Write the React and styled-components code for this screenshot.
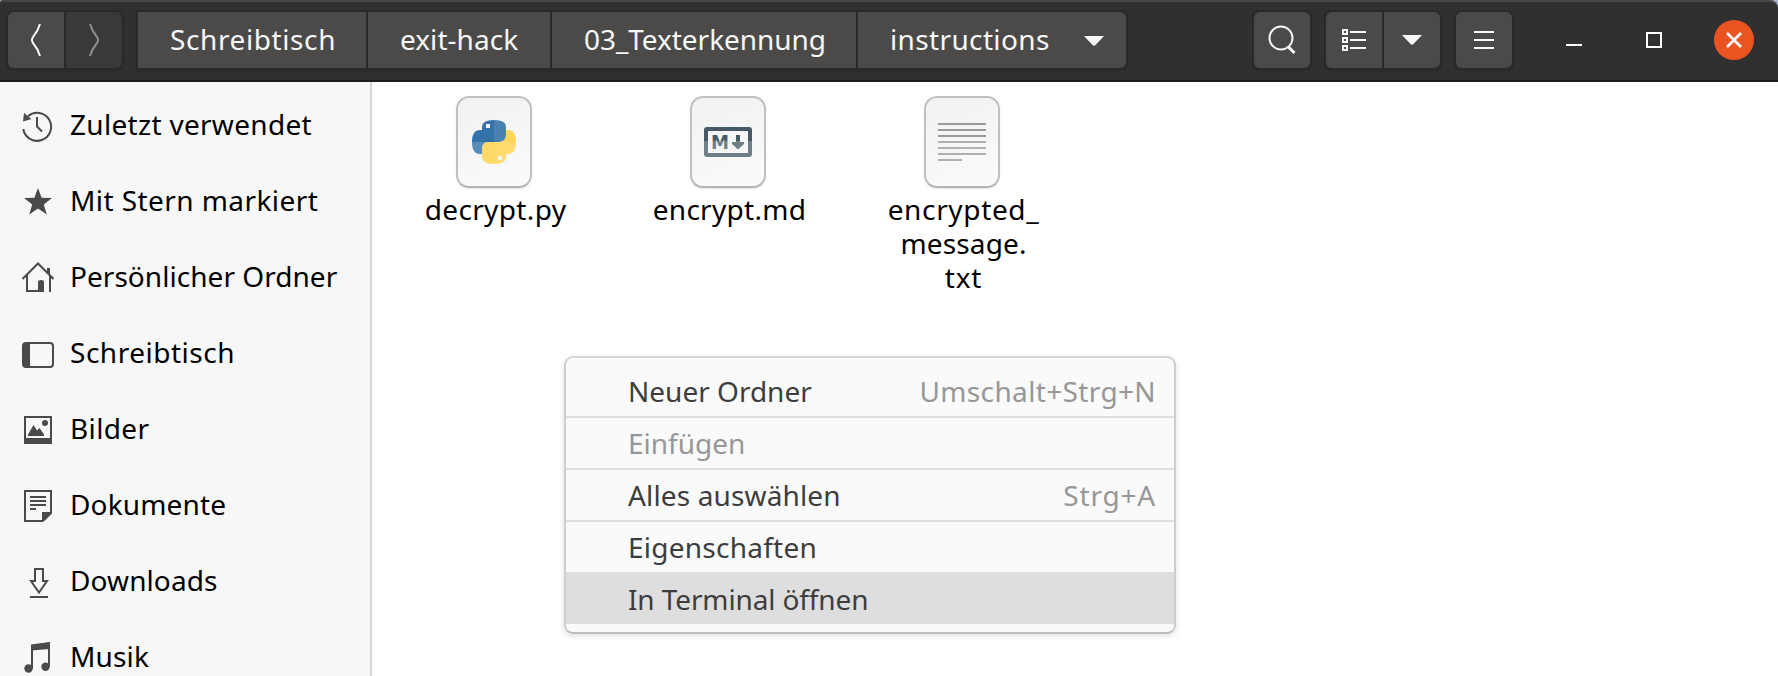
import React from "react";
import styled, { createGlobalStyle, css } from "styled-components";

const GlobalStyle = createGlobalStyle`
  *, *::before, *::after { box-sizing: border-box; }
  body {
    margin: 0;
    background: #fff;
    font-family: "Noto Sans", "Open Sans", sans-serif;
    font-size: 28px;
    overflow: hidden;
  }
  svg { display: block; flex: none; }
`;

const Window = styled.div`
  display: flex;
  flex-direction: column;
  width: 1778px;
  height: 676px;
  background: #a9b3c9;
  overflow: hidden;
`;

const HeaderBar = styled.header`
  display: flex;
  align-items: flex-start;
  height: 82px;
  flex: none;
  padding: 8px 0 0 6px;
  border-top: 2px solid #474546;
  border-bottom: 2px solid #1f1c1e;
  border-radius: 3px 8px 0 0;
  background: #322f30;
`;

const ButtonGroup = styled.div`
  display: flex;
  gap: 2px;
  height: 60px;
  padding: 2px;
  margin-left: ${(p) => p.$before || 0}px;
  border-radius: ${(p) => (p.$squareStart ? "0 8px 8px 0" : "8px")};
  background: #2a2828;
  box-shadow: 0 2px 1px rgba(0, 0, 0, 0.06);
`;

const HeaderButton = styled.button`
  display: flex;
  align-items: center;
  justify-content: center;
  width: 56px;
  height: 56px;
  padding: 0;
  border: 0;
  color: ${(p) => (p.$dim ? "#8f8e8d" : "#f7f7f7")};
  background: ${(p) => (p.$dim ? "#3a3939" : "#4b4a48")};
  &:first-child { border-top-left-radius: 6px; border-bottom-left-radius: 6px; }
  &:last-child { border-top-right-radius: 6px; border-bottom-right-radius: 6px; }
`;

const Crumb = styled.button`
  display: flex;
  align-items: center;
  justify-content: space-between;
  width: ${(p) => p.$width}px;
  height: 56px;
  padding: 0 22px 3px 32px;
  border: 0;
  color: #f7f7f7;
  background: #4b4a48;
  font: inherit;
  letter-spacing: ${(p) => p.$tracking}px;
  white-space: nowrap;
  &:last-child { border-radius: 0 6px 6px 0; }
`;

const CrumbCaret = styled.span`
  padding-top: 5px;
`;

const WindowControls = styled.div`
  display: flex;
  gap: 40px;
  margin: 10px 0 0 40px;
`;

const WindowButton = styled.button`
  display: flex;
  align-items: center;
  justify-content: center;
  width: 40px;
  height: 40px;
  padding: 0;
  border: 0;
  border-radius: 50%;
  color: #fff;
  background: ${(p) => (p.$close ? "#e95420" : "transparent")};
`;

const Body = styled.div`
  display: flex;
  flex: 1;
  min-height: 0;
`;

const Sidebar = styled.nav`
  width: 372px;
  flex: none;
  padding-top: 6px;
  border-right: 2px solid #d5d5d5;
  background: #f7f7f7;
  overflow: hidden;
`;

const Place = styled.a`
  display: flex;
  align-items: center;
  gap: 16px;
  height: 76px;
  padding: 0 0 0 22px;
  color: #4a4a4a;
`;

const PlaceName = styled.span`
  padding-bottom: 4px;
  color: #000;
  letter-spacing: ${(p) => p.$tracking}px;
  white-space: nowrap;
`;

const Files = styled.main`
  position: relative;
  display: flex;
  align-items: flex-start;
  flex: 1;
  padding: 14px 0 0 5px;
  background: #fff;
`;

const File = styled.figure`
  display: flex;
  flex-direction: column;
  align-items: center;
  width: 234px;
  margin: 0;
`;

const Sheet = styled.div`
  display: flex;
  align-items: center;
  justify-content: center;
  width: 76px;
  height: 92px;
  border: 2px solid #c0c0c0;
  border-bottom-color: #b3b3b3;
  border-radius: 13px;
  background: linear-gradient(160deg, #f1f1f1, #fbfbfb);
  box-shadow: 0 1px 2px rgba(0, 0, 0, 0.1);
`;

const FileName = styled.figcaption`
  padding: 4px 0 0 3px;
  color: #000;
  line-height: 34px;
  text-align: center;
`;

const NameLine = styled.div`
  letter-spacing: ${(p) => p.$tracking}px;
`;

const Menu = styled.div`
  position: absolute;
  left: 192px;
  top: 274px;
  width: 612px;
  padding: 8px 0;
  border: 2px solid #cdcdcd;
  border-top-color: #d6d6d6;
  border-bottom-color: #bdbdbd;
  border-radius: 9px;
  background: #fafafa;
  box-shadow: 0 2px 6px rgba(0, 0, 0, 0.13);
`;

const MenuItem = styled.div`
  display: flex;
  align-items: center;
  justify-content: space-between;
  height: 50px;
  padding: 0 18px 0 62px;
  color: ${(p) => (p.$disabled ? "#979797" : "#3d3d3d")};
  line-height: 50px;
  ${(p) =>
    p.$separated &&
    css`
      height: 52px;
      border-bottom: 2px solid #dedede;
    `}
  ${(p) =>
    p.$selected &&
    css`
      height: 52px;
      padding-top: 2px;
      background: #dedede;
    `}
`;

const MenuText = styled.span`
  letter-spacing: ${(p) => p.$tracking || 0}px;
  white-space: nowrap;
`;

const Shortcut = styled(MenuText)`
  color: #979797;
`;

const Caret = () => (
  <svg width="20" height="10" viewBox="0 0 20 10">
    <path d="M0 0H20L11.5 9Q10 10.5 8.5 9Z" fill="currentColor" />
  </svg>
);

const Angle = ({ forward }) => (
  <svg width="12" height="34" viewBox="0 0 12 34" fill="none" stroke="currentColor" strokeWidth="2">
    <path d={forward ? "M2 1 Q4 8 9 14 Q11 17 9 20 Q4 26 2 33" : "M10 1 Q8 8 3 14 Q1 17 3 20 Q8 26 10 33"} />
  </svg>
);

const SearchIcon = () => (
  <svg width="32" height="32" viewBox="0 0 32 32" fill="none" stroke="currentColor">
    <circle cx="15" cy="14" r="11.5" strokeWidth="2" />
    <path d="M22 22.5L28.5 29" strokeWidth="3" />
  </svg>
);

const ListIcon = () => (
  <svg width="24" height="22" viewBox="0 0 24 22" fill="none" stroke="currentColor" strokeWidth="2">
    <path d="M1 1h4v4h-4zM1 9h4v4h-4zM1 17h4v4h-4zM8 3h16M8 11h16M8 19h16" />
  </svg>
);

const MenuIcon = () => (
  <svg width="20" height="18" viewBox="0 0 20 18" stroke="currentColor" strokeWidth="2">
    <path d="M0 1h20M0 9h20M0 17h20" />
  </svg>
);

const ControlIcon = ({ d, width = 2 }) => (
  <svg width="16" height="16" viewBox="0 0 16 16" fill="none" stroke="currentColor" strokeWidth={width}>
    <path d={d} />
  </svg>
);

const placeDrawings = {
  recent: (
    <>
      <path d="M1.3 19A14 14 0 1 0 6 6.2" />
      <path d="M1 11.5L2 3L9.5 9Z" fill="currentColor" stroke="none" />
      <path d="M15 7v9.500l5 5" />
    </>
  ),
  star: (
    <path
      d="M16 2L19.6 11.7L30 12L21.800 18.400L24.800 28.500L16 22.600L7.200 28.500L10.200 18.400L2 12L12.400 11.700Z"
      fill="currentColor"
      stroke="none"
    />
  ),
  home: (
    <>
      <path d="M0.500 17L16 1.500L31.500 17" />
      <path d="M5 13v16h17" />
      <path d="M28 14v16" />
      <path d="M16 30V20q0-2 3-2t3 2v10z" fill="currentColor" stroke="none" />
      <path d="M25 10V6h3v7z" fill="currentColor" stroke="none" />
    </>
  ),
  desktop: (
    <>
      <rect x="1" y="5" width="30" height="24" rx="3" />
      <path d="M1 7q0-2 2-2h5v24H3q-2 0-2-2z" fill="currentColor" stroke="none" />
    </>
  ),
  pictures: (
    <>
      <path d="M3 3h26v26H3z" />
      <path d="M3 24h26v5H3z" fill="currentColor" stroke="none" />
      <path d="M6 22V20.500L11.500 11L15 16.500L17.500 14L22 20.500V22z" fill="currentColor" stroke="none" />
      <circle cx="23" cy="9" r="3" fill="currentColor" stroke="none" />
    </>
  ),
  documents: (
    <>
      <path d="M21 31H3V1h26v22L21 31" />
      <path d="M20 32V22h10z" fill="currentColor" stroke="none" />
      <path d="M8 7h16M8 11h16M8 15h16M8 19h6" />
    </>
  ),
  downloads: (
    <>
      <path d="M13 3h8v12h4L17 26.500L9 15h4z" />
      <path d="M8 31h18" />
    </>
  ),
  music: (
    <>
      <path d="M10 27V4L27 1.500V25" />
      <path d="M9 2.500L28 0V7L9 8.500z" fill="currentColor" stroke="none" />
      <circle cx="6.500" cy="26.500" r="4.200" fill="currentColor" stroke="none" />
      <circle cx="23.500" cy="24.800" r="4.200" fill="currentColor" stroke="none" />
    </>
  ),
};

const PlaceIcon = ({ name }) => (
  <svg width="32" height="32" viewBox="0 0 32 32" fill="none" stroke="currentColor" strokeWidth="2">
    {placeDrawings[name]}
  </svg>
);

const snake =
  "M10 10V7Q10 0 22 0T34 7V15Q34 22 27 22H17Q10 22 10 29V34H8Q0 34 0 22T8 10Z";

const PythonIcon = () => (
  <svg width="44" height="44" viewBox="0 0 44 44">
    <defs>
      <clipPath id="snakes">
        <path d={snake} />
        <path d={snake} transform="rotate(180 22 22)" />
      </clipPath>
    </defs>
    <path d={snake} fill="#3473a9" />
    <path d={snake} fill="#ffd147" transform="rotate(180 22 22)" />
    <g clipPath="url(#snakes)" fill="#fff">
      <path d="M22 0h22v22H22z" opacity="0.1" />
      <path d="M0 22h44v22H0z" opacity="0.18" />
      <path d="M22 22h22v22H22z" opacity="0.05" />
    </g>
    <path d="M14 4h4v4h-4zM26 36h4v4h-4z" fill="#f5f5f5" />
  </svg>
);

const MarkdownLetter = styled.text`
  font-family: "DejaVu Sans", sans-serif;
  font-weight: 700;
  font-size: 19px;
`;

const MarkdownIcon = () => (
  <svg width="48" height="30" viewBox="0 0 48 30">
    <defs>
      <linearGradient id="slate" x1="0" y1="0" x2="0" y2="30" gradientUnits="userSpaceOnUse">
        <stop offset="0.467" stopColor="#455a64" />
        <stop offset="0.467" stopColor="#6f7f87" />
      </linearGradient>
    </defs>
    <rect x="2" y="2" width="44" height="26" rx="1" fill="none" stroke="url(#slate)" strokeWidth="4" />
    <MarkdownLetter x="7" y="22" textLength="18" lengthAdjust="spacingAndGlyphs" fill="url(#slate)">
      M
    </MarkdownLetter>
    <path d="M32 8h4v7h4v2L34 22.500L28 17v-2h4z" fill="url(#slate)" />
  </svg>
);

const TextIcon = () => (
  <svg width="48" height="38" viewBox="0 0 48 38" strokeWidth="2">
    <path d="M0 1h48M0 7h48M0 13h48" stroke="#9b9b9b" />
    <path d="M0 19h48M0 25h48M0 31h48M0 37h24" stroke="#b0b0b0" />
  </svg>
);

const crumbs = [
  { name: "Schreibtisch", width: 228, tracking: 0.6 },
  { name: "exit-hack", width: 182, tracking: 0.04 },
  { name: "03_Texterkennung", width: 304, tracking: -0.05 },
  { name: "instructions", width: 268, tracking: 0.36, menu: true },
];

const places = [
  { name: "Zuletzt verwendet", icon: "recent", tracking: 0.3 },
  { name: "Mit Stern markiert", icon: "star", tracking: 0.43 },
  { name: "Persönlicher Ordner", icon: "home", tracking: 0.04 },
  { name: "Schreibtisch", icon: "desktop", tracking: 0.52 },
  { name: "Bilder", icon: "pictures", tracking: 0.37 },
  { name: "Dokumente", icon: "documents", tracking: 0.15 },
  { name: "Downloads", icon: "downloads", tracking: 0.1 },
  { name: "Musik", icon: "music", tracking: 0.17 },
];

const files = [
  { Icon: PythonIcon, lines: [["decrypt.py", 0.36]] },
  { Icon: MarkdownIcon, lines: [["encrypt.md", 0.3]] },
  { Icon: TextIcon, lines: [["encrypted_", 0.65], ["message.", 0.15], ["txt", 0.9]] },
];

const menuItems = [
  { name: "Neuer Ordner", keys: "Umschalt+Strg+N", keysTracking: 0.36, separated: true },
  { name: "Einfügen", disabled: true, separated: true },
  { name: "Alles auswählen", tracking: 0.14, keys: "Strg+A", keysTracking: 0.8, separated: true },
  { name: "Eigenschaften", tracking: 0.25 },
  { name: "In Terminal öffnen", tracking: -0.12, selected: true },
];

export default function App() {
  return (
    <Window>
      <GlobalStyle />
      <HeaderBar>
        <ButtonGroup>
          <HeaderButton aria-label="Zurück"><Angle /></HeaderButton>
          <HeaderButton aria-label="Vor" $dim><Angle forward /></HeaderButton>
        </ButtonGroup>
        <ButtonGroup $before={12} $squareStart>
          {crumbs.map((c) => (
            <Crumb key={c.name} $width={c.width} $tracking={c.tracking}>
              {c.name}
              {c.menu && <CrumbCaret><Caret /></CrumbCaret>}
            </Crumb>
          ))}
        </ButtonGroup>
        <ButtonGroup $before={124}>
          <HeaderButton aria-label="Suchen"><SearchIcon /></HeaderButton>
        </ButtonGroup>
        <ButtonGroup $before={12}>
          <HeaderButton aria-label="Liste"><ListIcon /></HeaderButton>
          <HeaderButton aria-label="Ansicht"><Caret /></HeaderButton>
        </ButtonGroup>
        <ButtonGroup $before={12}>
          <HeaderButton aria-label="Menü"><MenuIcon /></HeaderButton>
        </ButtonGroup>
        <WindowControls>
          <WindowButton aria-label="Minimieren"><ControlIcon d="M0 13h16" /></WindowButton>
          <WindowButton aria-label="Maximieren"><ControlIcon d="M1 1h14v14H1z" /></WindowButton>
          <WindowButton aria-label="Schließen" $close><ControlIcon d="M1 1L15 15M15 1L1 15" width={2.6} /></WindowButton>
        </WindowControls>
      </HeaderBar>
      <Body>
        <Sidebar>
          {places.map((p) => (
            <Place key={p.name}>
              <PlaceIcon name={p.icon} />
              <PlaceName $tracking={p.tracking}>{p.name}</PlaceName>
            </Place>
          ))}
        </Sidebar>
        <Files>
          {files.map(({ Icon, lines }) => (
            <File key={lines[0][0]}>
              <Sheet><Icon /></Sheet>
              <FileName>
                {lines.map(([text, tracking]) => (
                  <NameLine key={text} $tracking={tracking}>{text}</NameLine>
                ))}
              </FileName>
            </File>
          ))}
          <Menu>
            {menuItems.map((m) => (
              <MenuItem key={m.name} $disabled={m.disabled} $separated={m.separated} $selected={m.selected}>
                <MenuText $tracking={m.tracking}>{m.name}</MenuText>
                {m.keys && <Shortcut $tracking={m.keysTracking}>{m.keys}</Shortcut>}
              </MenuItem>
            ))}
          </Menu>
        </Files>
      </Body>
    </Window>
  );
}
